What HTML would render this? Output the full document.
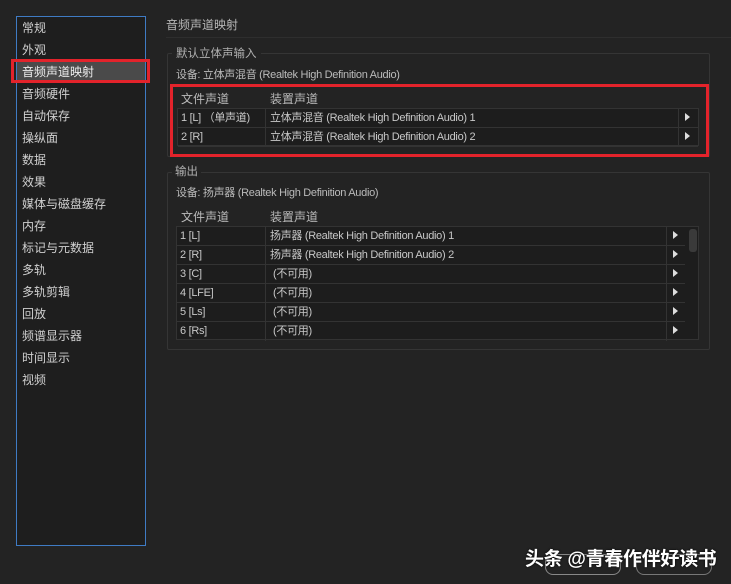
<!DOCTYPE html>
<html><head><meta charset="utf-8"><style>
*{margin:0;padding:0;box-sizing:border-box}
body{width:731px;height:584px;background:#232323;font-family:"Liberation Sans","Noto Sans CJK SC",sans-serif;font-size:12px;color:#c8c8c8;position:relative;overflow:hidden}
.a{position:absolute;white-space:nowrap}
#left{left:16px;top:16px;width:130px;height:530px;border:1px solid #3f7bc4;background:#1e1e1e}
.it{position:absolute;left:6px;height:22px;line-height:22px;font-size:12px;color:#d0d0d0}
.grp{border:1px solid #353535;border-radius:2px}
.tbl{background:#1d1d1d;border:1px solid #333}
.row{position:absolute;left:0;height:19px;line-height:19px;border-bottom:1px solid #333;font-size:11px;letter-spacing:-0.3px}
.row span{position:absolute}
.tri{position:absolute;width:0;height:0;border-top:4px solid transparent;border-bottom:4px solid transparent;border-left:5px solid #ddd}
.dev{font-size:11px;color:#bbb;letter-spacing:-0.3px}
</style></head><body>
<div class="a" id="left"></div>
<div class="a" style="left:17px;top:61px;width:128px;height:21px;background:#4a4a4a"></div>
<div class="a" style="left:11px;top:59px;width:139px;height:24px;border:3px solid #e3232b"></div>
<div class="it a" style="top:17px;left:22px">常规</div>
<div class="it a" style="top:39px;left:22px">外观</div>
<div class="it a" style="top:61px;left:22px;color:#eee">音频声道映射</div>
<div class="it a" style="top:83px;left:22px">音频硬件</div>
<div class="it a" style="top:105px;left:22px">自动保存</div>
<div class="it a" style="top:127px;left:22px">操纵面</div>
<div class="it a" style="top:149px;left:22px">数据</div>
<div class="it a" style="top:171px;left:22px">效果</div>
<div class="it a" style="top:193px;left:22px">媒体与磁盘缓存</div>
<div class="it a" style="top:215px;left:22px">内存</div>
<div class="it a" style="top:237px;left:22px">标记与元数据</div>
<div class="it a" style="top:259px;left:22px">多轨</div>
<div class="it a" style="top:281px;left:22px">多轨剪辑</div>
<div class="it a" style="top:303px;left:22px">回放</div>
<div class="it a" style="top:325px;left:22px">频谱显示器</div>
<div class="it a" style="top:347px;left:22px">时间显示</div>
<div class="it a" style="top:369px;left:22px">视频</div>

<div class="a" style="left:166px;top:16px;color:#b8b8b8">音频声道映射</div>
<div class="a" style="left:166px;top:37px;width:565px;height:1px;background:#2e2e2e"></div>

<div class="a grp" style="left:167px;top:53px;width:543px;height:104px"></div>
<div class="a" style="left:172px;top:45px;background:#232323;padding:0 4px;color:#b0b0b0;font-size:11.5px">默认立体声输入</div>
<div class="a dev" style="left:176px;top:66px">设备: 立体声混音 (Realtek High Definition Audio)</div>
<div class="a" style="left:181px;top:90px;color:#bbb">文件声道</div>
<div class="a" style="left:270px;top:90px;color:#bbb">装置声道</div>
<div class="a tbl" style="left:177px;top:108px;width:522px;height:38px">
 <div class="row" style="top:0;width:520px"><span style="left:3px">1 [L] （单声道)</span><span style="left:92px">立体声混音 (Realtek High Definition Audio) 1</span></div>
 <div class="row" style="top:19px;width:520px"><span style="left:3px">2 [R]</span><span style="left:92px">立体声混音 (Realtek High Definition Audio) 2</span></div>
 <div class="a" style="left:87px;top:0;width:1px;height:38px;background:#333"></div>
 <div class="a" style="left:500px;top:0;width:1px;height:38px;background:#333"></div>
 <div class="tri" style="left:507px;top:4px"></div><div class="tri" style="left:507px;top:23px"></div>
</div>
<div class="a" style="left:170px;top:84px;width:539px;height:73px;border:3px solid #e3232b"></div>

<div class="a grp" style="left:167px;top:172px;width:543px;height:178px"></div>
<div class="a" style="left:172px;top:163px;background:#232323;padding:0 3px;color:#b0b0b0;font-size:11.5px">输出</div>
<div class="a dev" style="left:176px;top:184px">设备: 扬声器 (Realtek High Definition Audio)</div>
<div class="a" style="left:181px;top:208px;color:#bbb">文件声道</div>
<div class="a" style="left:270px;top:208px;color:#bbb">装置声道</div>
<div class="a tbl" style="left:176px;top:226px;width:523px;height:114px">
 <div class="row" style="top:0;width:508px"><span style="left:3px">1 [L]</span><span style="left:93px">扬声器 (Realtek High Definition Audio) 1</span></div>
 <div class="row" style="top:19px;width:508px"><span style="left:3px">2 [R]</span><span style="left:93px">扬声器 (Realtek High Definition Audio) 2</span></div>
 <div class="row" style="top:38px;width:508px"><span style="left:3px">3 [C]</span><span style="left:96px">(不可用)</span></div>
 <div class="row" style="top:57px;width:508px"><span style="left:3px">4 [LFE]</span><span style="left:96px">(不可用)</span></div>
 <div class="row" style="top:76px;width:508px"><span style="left:3px">5 [Ls]</span><span style="left:96px">(不可用)</span></div>
 <div class="row" style="top:95px;width:508px;border:none"><span style="left:3px">6 [Rs]</span><span style="left:96px">(不可用)</span></div>
 <div class="a" style="left:88px;top:0;width:1px;height:114px;background:#333"></div>
 <div class="a" style="left:489px;top:0;width:1px;height:114px;background:#333"></div>
 <div class="tri" style="left:496px;top:4px"></div><div class="tri" style="left:496px;top:23px"></div><div class="tri" style="left:496px;top:42px"></div><div class="tri" style="left:496px;top:61px"></div><div class="tri" style="left:496px;top:80px"></div><div class="tri" style="left:496px;top:99px"></div>
 <div class="a" style="left:512px;top:2px;width:8px;height:23px;background:#3a3a3a;border-radius:3px"></div>
</div>

<div class="a" style="left:545px;top:554px;width:76px;height:21px;border:1px solid #888;border-radius:8px"></div>
<div class="a" style="left:636px;top:554px;width:76px;height:21px;border:1px solid #777;border-radius:8px"></div>
<div class="a" style="left:525px;top:544px;font-size:19px;color:#fff;font-weight:bold;letter-spacing:-0.3px;text-shadow:0 0 2px #000">头条 @青春作伴好读书</div>
</body></html>
